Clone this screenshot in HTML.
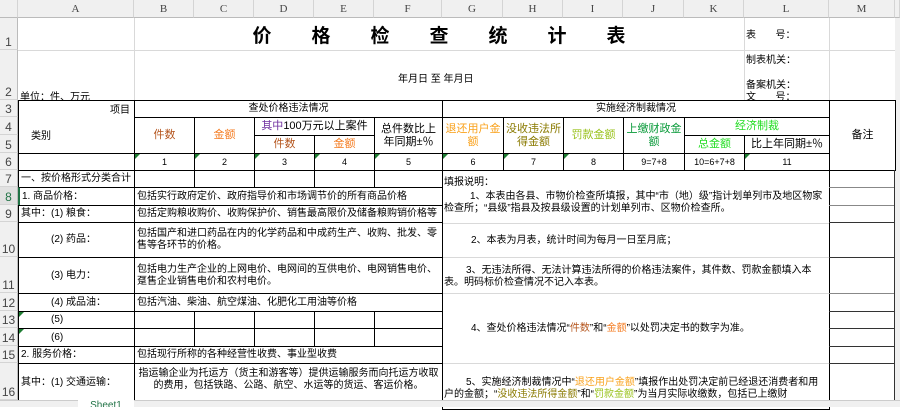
<!DOCTYPE html><html><head><meta charset="utf-8"><style>
*{margin:0;padding:0;box-sizing:border-box}
body{width:900px;height:407px;overflow:hidden;background:#fff;font-family:"Liberation Sans","Noto Sans CJK SC",sans-serif;font-size:10px;color:#000;position:relative}
div{position:absolute}
.gh{background:#d9d9d9;height:1px}
.gv{background:#d9d9d9;width:1px}
.c{display:flex;align-items:center;justify-content:center;text-align:center;line-height:12px;border:1px solid #000;background:#fff;white-space:nowrap}
.l{justify-content:flex-start;padding-left:2px;text-align:left}
.w{white-space:normal}
.hf{font-size:11px;line-height:13px}
.hd{background:#f0f0f0;color:#444;font-family:"Liberation Serif",serif;font-size:11px;display:flex;align-items:center;justify-content:center;border-right:1px solid #d4d4d4;border-bottom:1px solid #bbb}
.rh{background:#f0f0f0;color:#444;font-size:12px;left:0;width:18px;border-bottom:1px solid #d4d4d4;border-right:1px solid #bbb;display:flex;align-items:flex-end;justify-content:center;line-height:14px}
.tri{width:0;height:0;border-top:5px solid #1e7d32;border-right:5px solid transparent}
.ex div{text-align:left;white-space:normal}
</style></head><body>
<div class="gh" style="left:18px;top:50px;width:877px"></div>
<div class="gh" style="left:829px;top:117px;width:66px"></div>
<div class="gh" style="left:829px;top:135px;width:66px"></div>
<div class="gv" style="left:744px;top:18px;height:82px"></div>
<div class="gv" style="left:829px;top:18px;height:82px"></div>
<div class="gv" style="left:134px;top:18px;height:82px"></div>
<div class="gv" style="left:895px;top:18px;height:382px"></div>
<div class="hd" style="left:0;top:0;width:18px;height:18px"></div>
<div class="hd" style="left:18px;top:0;width:116px;height:18px">A</div>
<div class="hd" style="left:134px;top:0;width:60px;height:18px">B</div>
<div class="hd" style="left:194px;top:0;width:60px;height:18px">C</div>
<div class="hd" style="left:254px;top:0;width:60px;height:18px">D</div>
<div class="hd" style="left:314px;top:0;width:60px;height:18px">E</div>
<div class="hd" style="left:374px;top:0;width:68px;height:18px">F</div>
<div class="hd" style="left:442px;top:0;width:61px;height:18px">G</div>
<div class="hd" style="left:503px;top:0;width:60px;height:18px">H</div>
<div class="hd" style="left:563px;top:0;width:60px;height:18px">I</div>
<div class="hd" style="left:623px;top:0;width:61px;height:18px">J</div>
<div class="hd" style="left:684px;top:0;width:60px;height:18px">K</div>
<div class="hd" style="left:744px;top:0;width:85px;height:18px">L</div>
<div class="hd" style="left:829px;top:0;width:66px;height:18px">M</div>
<div class="hd" style="left:895px;top:0;width:5px;height:18px"></div>
<div style="left:895px;top:18px;width:5px;height:382px;background:#f0f0f0"></div>
<div class="rh" style="top:18px;height:32px">1</div>
<div class="rh" style="top:50px;height:50px">2</div>
<div class="rh" style="top:100px;height:17px">3</div>
<div class="rh" style="top:117px;height:18px">4</div>
<div class="rh" style="top:135px;height:18px">5</div>
<div class="rh" style="top:153px;height:17px">6</div>
<div class="rh" style="top:170px;height:17px">7</div>
<div class="rh" style="top:187px;height:18px;color:#217346;background:#e1e1e1">8</div>
<div class="rh" style="top:205px;height:17px">9</div>
<div class="rh" style="top:222px;height:35px">10</div>
<div class="rh" style="top:257px;height:36px">11</div>
<div class="rh" style="top:293px;height:18px">12</div>
<div class="rh" style="top:311px;height:17px">13</div>
<div class="rh" style="top:328px;height:18px">14</div>
<div class="rh" style="top:346px;height:17px">15</div>
<div class="rh" style="top:363px;height:37px">16</div>
<div style="left:134px;top:18px;width:610px;height:32px;display:flex;align-items:center;justify-content:center;font-size:19px;font-weight:bold;letter-spacing:40px;padding-left:40px">价格检查统计表</div>
<div style="left:398px;top:70px;font-size:10px">年月日 至 年月日</div>
<div style="left:20px;top:88px;font-size:10px">单位：件、万元</div>
<div style="left:746px;top:26px">表&nbsp;&nbsp;&nbsp;&nbsp;&nbsp;&nbsp;&nbsp;号：</div>
<div style="left:746px;top:51px">制表机关：</div>
<div style="left:746px;top:76px">备案机关：</div>
<div style="left:746px;top:88px">文&nbsp;&nbsp;&nbsp;&nbsp;&nbsp;&nbsp;&nbsp;号：</div>
<div class="c" style="left:18px;top:100px;width:117px;height:54px;display:block">
<span style="position:absolute;right:4px;top:4px">项目</span><span style="position:absolute;left:12px;top:30px">类别</span></div>
<div class="c" style="left:134px;top:100px;width:309px;height:18px">查处价格违法情况</div>
<div class="c" style="left:442px;top:100px;width:388px;height:18px">实施经济制裁情况</div>
<div class="c hf" style="left:829px;top:100px;width:67px;height:71px">备注</div>
<div class="c hf" style="left:134px;top:117px;width:61px;height:37px;color:#b4541c">件数</div>
<div class="c hf" style="left:194px;top:117px;width:61px;height:37px;color:#f47b20">金额</div>
<div class="c hf" style="left:254px;top:117px;width:121px;height:19px"><span style="color:#7030a0">其中</span>100万元以上案件</div>
<div class="c hf" style="left:254px;top:135px;width:61px;height:19px;color:#b4541c">件数</div>
<div class="c hf" style="left:314px;top:135px;width:61px;height:19px;color:#f47b20">金额</div>
<div class="c w hf" style="left:374px;top:117px;width:69px;height:37px;padding:0 1px">总件数比上年同期±％</div>
<div class="c w hf" style="left:442px;top:117px;width:62px;height:37px;color:#f9a11b;padding:0 1px">退还用户金额</div>
<div class="c w hf" style="left:503px;top:117px;width:61px;height:37px;color:#8a7a00;padding:0 1px">没收违法所得金额</div>
<div class="c hf" style="left:563px;top:117px;width:61px;height:37px;color:#99c21c">罚款金额</div>
<div class="c w hf" style="left:623px;top:117px;width:62px;height:37px;color:#0a9a3a;padding:0 1px">上缴财政金额</div>
<div class="c hf" style="left:684px;top:117px;width:146px;height:19px;color:#22dd22">经济制裁</div>
<div class="c hf" style="left:684px;top:135px;width:61px;height:19px;color:#22dd22">总金额</div>
<div class="c hf" style="left:744px;top:135px;width:86px;height:19px">比上年同期±％</div>
<div class="c" style="left:18px;top:153px;width:117px;height:18px"></div>
<div class="c" style="left:134px;top:153px;width:61px;height:18px;font-size:9px">1</div>
<div class="c" style="left:194px;top:153px;width:61px;height:18px;font-size:9px">2</div>
<div class="c" style="left:254px;top:153px;width:61px;height:18px;font-size:9px">3</div>
<div class="c" style="left:314px;top:153px;width:61px;height:18px;font-size:9px">4</div>
<div class="c" style="left:374px;top:153px;width:69px;height:18px;font-size:9px">5</div>
<div class="c" style="left:442px;top:153px;width:62px;height:18px;font-size:9px">6</div>
<div class="c" style="left:503px;top:153px;width:61px;height:18px;font-size:9px">7</div>
<div class="c" style="left:563px;top:153px;width:61px;height:18px;font-size:9px">8</div>
<div class="c" style="left:623px;top:153px;width:62px;height:18px;font-size:9px">9=7+8</div>
<div class="c" style="left:684px;top:153px;width:61px;height:18px;font-size:9px">10=6+7+8</div>
<div class="c" style="left:744px;top:153px;width:86px;height:18px;font-size:9px">11</div>
<div class="tri" style="left:135px;top:154px"></div><div class="tri" style="left:195px;top:154px"></div><div class="tri" style="left:255px;top:154px"></div><div class="tri" style="left:315px;top:154px"></div><div class="tri" style="left:375px;top:154px"></div><div class="tri" style="left:443px;top:154px"></div><div class="tri" style="left:504px;top:154px"></div><div class="tri" style="left:564px;top:154px"></div><div class="tri" style="left:745px;top:154px"></div>
<div class="c l" style="left:18px;top:170px;width:117px;height:18px">一、按价格形式分类合计</div>
<div class="c l" style="left:18px;top:187px;width:117px;height:19px;border-left:2px solid #217346">1. 商品价格：</div>
<div class="c l" style="left:18px;top:205px;width:117px;height:18px">其中：(1) 粮食：</div>
<div class="c l" style="left:18px;top:222px;width:117px;height:36px;padding-left:32px">(2) 药品：</div>
<div class="c l" style="left:18px;top:257px;width:117px;height:37px;padding-left:32px">(3) 电力：</div>
<div class="c l" style="left:18px;top:293px;width:117px;height:19px;padding-left:32px">(4) 成品油：</div>
<div class="c l" style="left:18px;top:311px;width:117px;height:18px;padding-left:32px">(5)</div>
<div class="c l" style="left:18px;top:328px;width:117px;height:19px;padding-left:32px">(6)</div>
<div class="tri" style="left:19px;top:312px"></div><div class="tri" style="left:19px;top:329px"></div>
<div class="c l" style="left:18px;top:346px;width:117px;height:18px">2. 服务价格：</div>
<div class="c l" style="left:18px;top:363px;width:117px;height:40px">其中：(1) 交通运输：</div>
<div class="c" style="left:134px;top:170px;width:61px;height:18px"></div>
<div class="c" style="left:194px;top:170px;width:61px;height:18px"></div>
<div class="c" style="left:254px;top:170px;width:61px;height:18px"></div>
<div class="c" style="left:314px;top:170px;width:61px;height:18px"></div>
<div class="c" style="left:374px;top:170px;width:69px;height:18px"></div>
<div class="c l" style="left:134px;top:187px;width:309px;height:19px">包括实行政府定价、政府指导价和市场调节价的所有商品价格</div>
<div class="c l" style="left:134px;top:205px;width:309px;height:18px">包括定购粮收购价、收购保护价、销售最高限价及储备粮购销价格等</div>
<div class="c l w" style="left:134px;top:222px;width:309px;height:36px">包括国产和进口药品在内的化学药品和中成药生产、收购、批发、零售等各环节的价格。</div>
<div class="c l w" style="left:134px;top:257px;width:309px;height:37px">包括电力生产企业的上网电价、电网间的互供电价、电网销售电价、趸售企业销售电价和农村电价。</div>
<div class="c l" style="left:134px;top:293px;width:309px;height:19px">包括汽油、柴油、航空煤油、化肥化工用油等价格</div>
<div class="c" style="left:134px;top:311px;width:61px;height:18px"></div><div class="c" style="left:194px;top:311px;width:61px;height:18px"></div><div class="c" style="left:254px;top:311px;width:61px;height:18px"></div><div class="c" style="left:314px;top:311px;width:61px;height:18px"></div><div class="c" style="left:374px;top:311px;width:69px;height:18px"></div>
<div class="c" style="left:134px;top:328px;width:61px;height:19px"></div><div class="c" style="left:194px;top:328px;width:61px;height:19px"></div><div class="c" style="left:254px;top:328px;width:61px;height:19px"></div><div class="c" style="left:314px;top:328px;width:61px;height:19px"></div><div class="c" style="left:374px;top:328px;width:69px;height:19px"></div>
<div class="c l" style="left:134px;top:346px;width:309px;height:18px">包括现行所称的各种经营性收费、事业型收费</div>
<div class="c w" style="left:134px;top:363px;width:309px;height:40px;align-items:flex-start;padding-top:4px">指运输企业为托运方（货主和游客等）提供运输服务而向托运方收取的费用，包括铁路、公路、航空、水运等的货运、客运价格。</div>
<div class="c ex" style="left:442px;top:170px;width:388px;height:240px;display:block;line-height:12px;text-align:left">
<div style="left:1px;top:6px">填报说明：</div>
<div style="left:1px;top:20px;width:384px;text-indent:26px">1、本表由各县、市物价检查所填报，其中“市（地）级”指计划单列市及地区物家检查所；“县级”指县及按县级设置的计划单列市、区物价检查所。</div>
<div style="left:0;top:52px;width:386px;height:1px;background:#d9d9d9"></div>
<div style="left:28px;top:64px">2、本表为月表，统计时间为每月一日至月底；</div>
<div style="left:0;top:86px;width:386px;height:1px;background:#d9d9d9"></div>
<div style="left:1px;top:94px;width:384px;text-indent:22px">3、无违法所得、无法计算违法所得的价格违法案件，其件数、罚款金额填入本表。明码标价检查情况不记入本表。</div>
<div style="left:0;top:122px;width:386px;height:1px;background:#d9d9d9"></div>
<div style="left:28px;top:152px;white-space:nowrap">4、查处价格违法情况“<span style="color:#b4541c">件数</span>”和“<span style="color:#f47b20">金额</span>”以处罚决定书的数字为准。</div>
<div style="left:0;top:192px;width:386px;height:1px;background:#d9d9d9"></div>
<div style="left:1px;top:206px;width:384px;text-indent:22px">5、实施经济制裁情况中“<span style="color:#f9a11b">退还用户金额</span>”填报作出处罚决定前已经退还消费者和用户的金额；“<span style="color:#8a7a00">没收违法所得金额</span>”和“<span style="color:#99c21c">罚款金额</span>”为当月实际收缴数，包括已上缴财</div>
</div>
<div style="left:829px;top:187px;width:66px;height:1px;background:#888"></div>
<div style="left:829px;top:205px;width:66px;height:1px;background:#888"></div>
<div style="left:829px;top:222px;width:66px;height:1px;background:#333"></div>
<div style="left:829px;top:257px;width:66px;height:1px;background:#333"></div>
<div style="left:829px;top:293px;width:66px;height:1px;background:#888"></div>
<div style="left:829px;top:311px;width:66px;height:1px;background:#333"></div>
<div style="left:829px;top:328px;width:66px;height:1px;background:#333"></div>
<div style="left:829px;top:346px;width:66px;height:1px;background:#333"></div>
<div style="left:829px;top:363px;width:66px;height:1px;background:#333"></div>
<div style="left:894px;top:170px;width:1px;height:230px;background:#333"></div>
<div style="left:0;top:400px;width:900px;height:7px;background:#f0f0f0;border-top:1px solid #ccc"></div>
<div style="left:78px;top:400px;width:56px;height:7px;background:#fff;color:#217346;font-size:10px;text-align:center;line-height:12px;overflow:hidden">Sheet1</div>
</body></html>
